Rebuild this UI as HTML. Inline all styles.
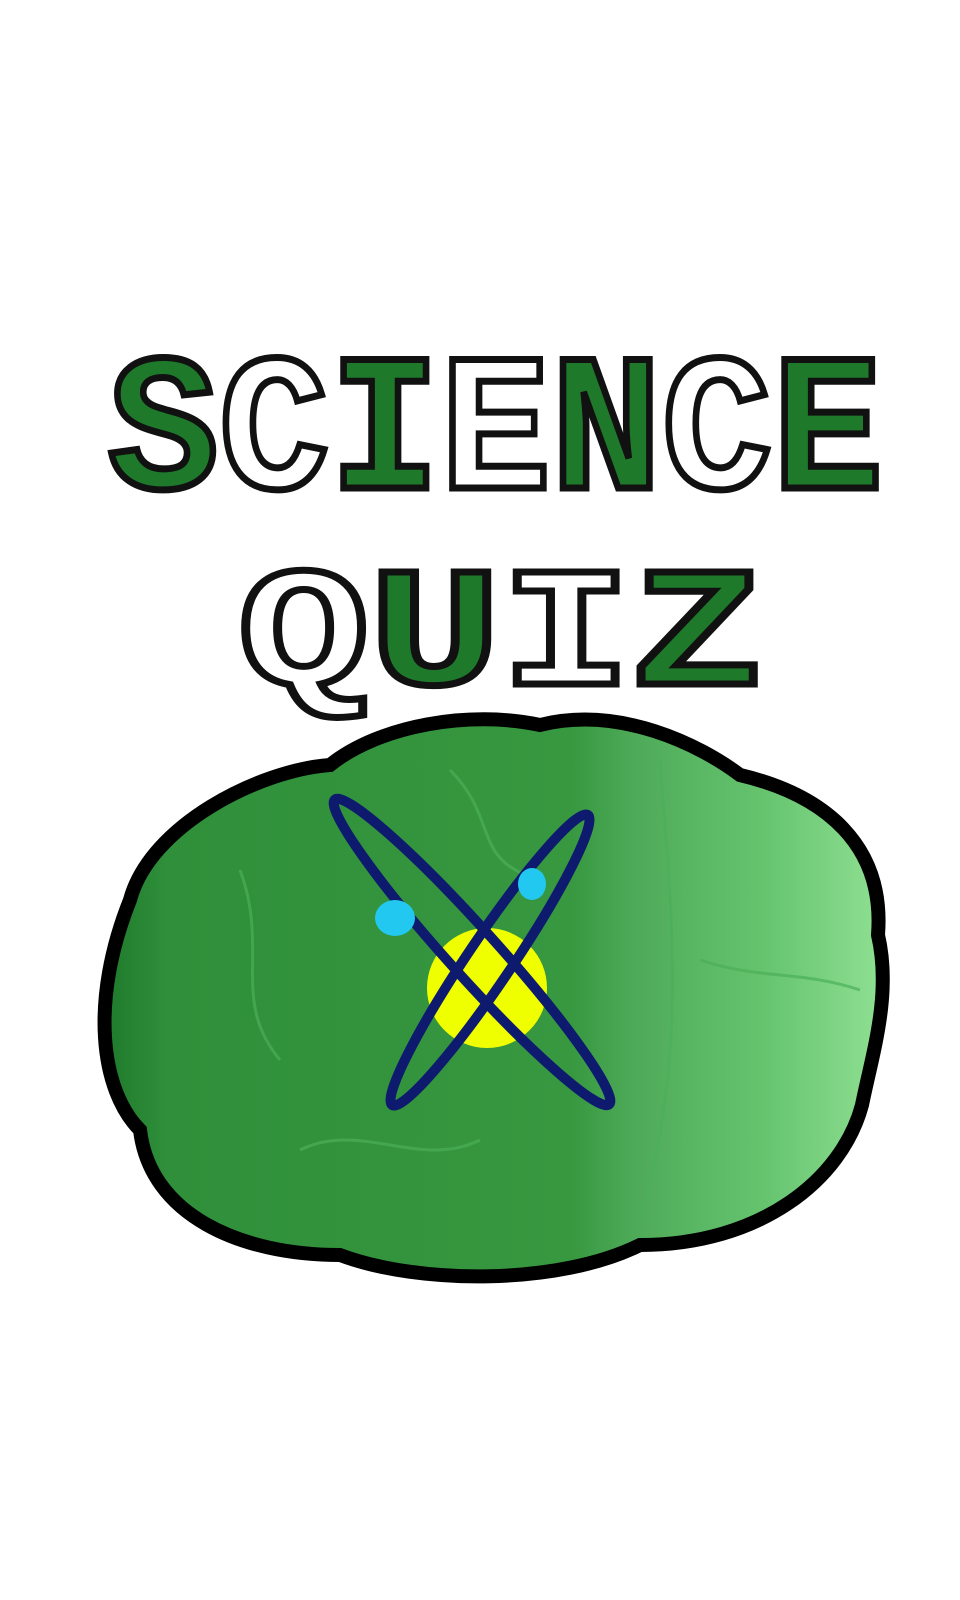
<!DOCTYPE html>
<html><head><meta charset="utf-8"><style>
html,body{margin:0;padding:0;background:#fff;width:960px;height:1600px;overflow:hidden}
</style></head><body>
<svg width="960" height="1600" viewBox="0 0 960 1600" xmlns="http://www.w3.org/2000/svg">
<defs>
<linearGradient id="g" x1="0" x2="1" y1="0" y2="0">
<stop offset="0" stop-color="#1f7a2c"/>
<stop offset="0.08" stop-color="#2f8f3a"/>
<stop offset="0.6" stop-color="#379840"/>
<stop offset="0.68" stop-color="#4eaa58"/>
<stop offset="0.85" stop-color="#66c46f"/>
<stop offset="1" stop-color="#8fe092"/>
</linearGradient>
</defs>
<g font-family="Liberation Mono, DejaVu Sans Mono, monospace" font-weight="bold" stroke="#111" stroke-width="7" stroke-linejoin="miter">
<text x="108" y="488" font-size="195" textLength="775" lengthAdjust="spacingAndGlyphs"><tspan fill="#1e7a2a">S</tspan><tspan fill="#fff">C</tspan><tspan fill="#1e7a2a">I</tspan><tspan fill="#fff">E</tspan><tspan fill="#1e7a2a">N</tspan><tspan fill="#fff">C</tspan><tspan fill="#1e7a2a">E</tspan></text>
<text x="238" y="684" font-size="170" textLength="525" lengthAdjust="spacingAndGlyphs"><tspan fill="#fff">Q</tspan><tspan fill="#1e7a2a">U</tspan><tspan fill="#fff">I</tspan><tspan fill="#1e7a2a">Z</tspan></text>
</g>
<path d="M130 900 C150 825 260 770 330 765 C380 725 470 710 540 725 C620 705 700 745 740 775 C825 795 885 845 878 935 C892 995 872 1055 862 1105 C842 1180 760 1245 640 1245 C560 1285 420 1285 340 1255 C240 1255 150 1215 140 1130 C100 1090 90 1000 130 900 Z" fill="url(#g)" stroke="#000" stroke-width="14"/>
<g fill="none" stroke="#4caf58" stroke-width="3" opacity="0.7">
<path d="M240 870 C270 950 230 1000 280 1060"/>
<path d="M450 770 C500 820 470 860 540 880"/>
<path d="M700 960 C760 980 800 970 860 990"/>
<path d="M300 1150 C360 1120 420 1170 480 1140"/>
<path d="M660 760 C670 900 690 1050 640 1220"/>
</g>
<circle cx="487" cy="988" r="60" fill="#f0ff00"/>
<ellipse cx="472" cy="952" rx="205" ry="24" transform="rotate(48 472 952)" fill="none" stroke="#0d1a6e" stroke-width="10"/>
<ellipse cx="490" cy="960" rx="175" ry="22" transform="rotate(-56 490 960)" fill="none" stroke="#0d1a6e" stroke-width="10"/>
<ellipse cx="395" cy="918" rx="20" ry="18" fill="#22c8f0"/>
<ellipse cx="532" cy="884" rx="14" ry="16" fill="#22c8f0"/>
</svg>
</body></html>
